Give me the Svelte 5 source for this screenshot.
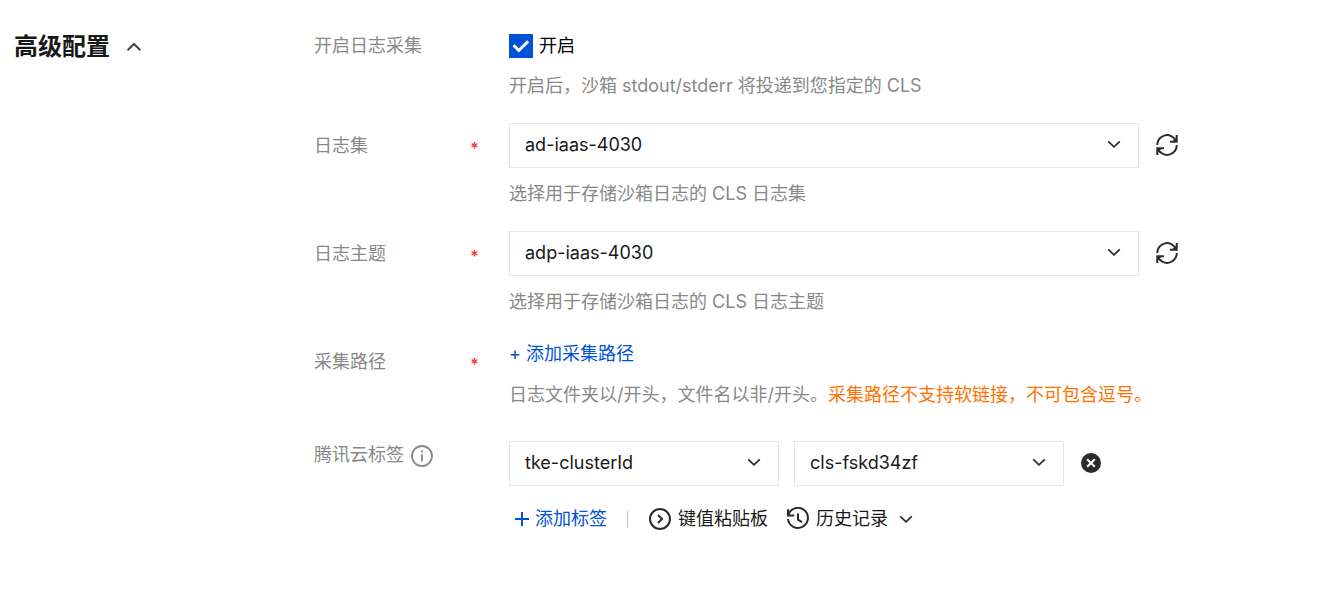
<script lang="ts">
    let expanded = $state(true);
    let logEnabled = $state(true);
    let logset = $state("ad-iaas-4030");
    let topic = $state("adp-iaas-4030");
    let tags = $state([{ key: "tke-clusterId", value: "cls-fskd34zf" }]);

    function addTag() {
        tags.push({ key: "tke-clusterId", value: "cls-fskd34zf" });
    }

    function removeTag(index: number) {
        tags.splice(index, 1);
    }
</script>

{#snippet chevron()}
    <svg class="chevron" width="14" height="14" viewBox="0 0 14 14" aria-hidden="true">
        <path d="M1.2 4.3 7 9.8l5.8-5.5" />
    </svg>
{/snippet}

{#snippet refreshButton(label: string)}
    <button type="button" class="icon-button" aria-label={label}>
        <svg width="24" height="24" viewBox="0 0 24 24" aria-hidden="true">
            <path d="M2.2 12A9.8 9.8 0 0 1 20.8 7.6M21.8 12A9.8 9.8 0 0 1 3.2 16.4" />
            <path d="M21.7 2v6.7H15M2.3 22v-6.7H9" />
            <path class="solid" d="M21.7 4v4.7H17zM2.3 20v-4.7H7z" />
        </svg>
    </button>
{/snippet}

<section class="advanced">
    <h2 class="title">
        <button type="button" aria-expanded={expanded} onclick={() => (expanded = !expanded)}>
            <span>高级配置</span>
            <svg class="title-arrow" class:closed={!expanded} width="16" height="16" viewBox="0 0 16 16" aria-hidden="true">
                <path d="M1.6 11.2 8 5l6.4 6.2" />
            </svg>
        </button>
    </h2>

    {#if expanded}
        <form class="form">
            <div class="row">
                <div class="label top">开启日志采集</div>
                <div class="control">
                    <label class="check">
                        <input type="checkbox" bind:checked={logEnabled} />
                        <span>开启</span>
                    </label>
                    <p class="hint">开启后，沙箱 stdout/stderr 将投递到您指定的 CLS</p>
                </div>
            </div>

            <div class="row">
                <label class="label" for="logset">日志集<span class="required">*</span></label>
                <div class="control">
                    <div class="field">
                        <div class="select">
                            <select id="logset" bind:value={logset}>
                                <option>ad-iaas-4030</option>
                            </select>
                            {@render chevron()}
                        </div>
                        {@render refreshButton("刷新日志集")}
                    </div>
                    <p class="hint">选择用于存储沙箱日志的 CLS 日志集</p>
                </div>
            </div>

            <div class="row">
                <label class="label" for="topic">日志主题<span class="required">*</span></label>
                <div class="control">
                    <div class="field">
                        <div class="select">
                            <select id="topic" bind:value={topic}>
                                <option>adp-iaas-4030</option>
                            </select>
                            {@render chevron()}
                        </div>
                        {@render refreshButton("刷新日志主题")}
                    </div>
                    <p class="hint">选择用于存储沙箱日志的 CLS 日志主题</p>
                </div>
            </div>

            <div class="row">
                <div class="label">采集路径<span class="required">*</span></div>
                <div class="control">
                    <button type="button" class="link add-path">+ 添加采集路径</button>
                    <p class="hint">
                        日志文件夹以/开头，文件名以非/开头。<span class="warning">采集路径不支持软链接，不可包含逗号。</span>
                    </p>
                </div>
            </div>

            <div class="row tags">
                <div class="label top">
                    腾讯云标签
                    <svg class="info" width="24" height="24" viewBox="0 0 24 24" aria-hidden="true">
                        <circle cx="12" cy="12" r="10" />
                        <path d="M12 10.2v7.2M12 6.4v2" />
                    </svg>
                </div>
                <div class="control">
                    {#each tags as tag, i}
                        <div class="field tag">
                            <div class="select">
                                <select aria-label="标签键" bind:value={tag.key}>
                                    <option>tke-clusterId</option>
                                </select>
                                {@render chevron()}
                            </div>
                            <div class="select">
                                <select aria-label="标签值" bind:value={tag.value}>
                                    <option>cls-fskd34zf</option>
                                </select>
                                {@render chevron()}
                            </div>
                            <button type="button" class="icon-button" aria-label="删除标签" onclick={() => removeTag(i)}>
                                <svg width="24" height="24" viewBox="0 0 24 24" aria-hidden="true">
                                    <circle class="solid" cx="12" cy="12" r="10" />
                                    <path class="cross" d="m8.2 8.2 7.6 7.6M15.8 8.2l-7.6 7.6" />
                                </svg>
                            </button>
                        </div>
                    {/each}
                    <div class="actions">
                        <button type="button" class="link" onclick={addTag}>
                            <svg width="16" height="16" viewBox="0 0 16 16" aria-hidden="true">
                                <path d="M8 1v14M1 8h14" />
                            </svg>
                            添加标签
                        </button>
                        <span class="divider"></span>
                        <button type="button" class="action">
                            <svg width="24" height="24" viewBox="0 0 24 24" aria-hidden="true">
                                <circle cx="12" cy="12" r="10" />
                                <path d="m10 8 4 4-4 4" />
                            </svg>
                            键值粘贴板
                        </button>
                        <button type="button" class="action history">
                            <svg width="24" height="24" viewBox="0 0 24 24" aria-hidden="true">
                                <path d="M2.3 8.2A10 10 0 1 1 2 12M2 2.2v6.3h6.2" />
                                <path d="M12 6.5v6.2l4 2.5" />
                            </svg>
                            历史记录
                            {@render chevron()}
                        </button>
                    </div>
                </div>
            </div>
        </form>
    {/if}
</section>

<style>
    :global(body) {
        margin: 0;
        background: #fff;
    }

    .advanced {
        display: grid;
        grid-template-columns: 300px minmax(0, 1fr);
        padding: 34px 14px;
        font-family: Inter, "Noto Sans CJK SC", sans-serif;
        font-size: 18px;
        line-height: 24px;
        color: #181818;
    }

    button,
    select {
        margin: 0;
        padding: 0;
        border: 0;
        background: none;
        font: inherit;
        color: inherit;
        cursor: pointer;
    }

    svg {
        flex: none;
        fill: none;
        stroke: #2b2b2b;
        stroke-width: 2;
    }

    .title {
        margin: 0;
        font-size: 24px;
        line-height: 26px;
        font-weight: 700;
    }

    .title button {
        display: flex;
        align-items: center;
        gap: 16px;
    }

    .title-arrow {
        stroke: #444;
    }

    .title-arrow.closed {
        transform: rotate(180deg);
    }

    .form {
        display: flex;
        flex-direction: column;
        gap: 24px;
    }

    .row {
        display: grid;
        grid-template-columns: 195px minmax(0, 1fr);
    }

    .row.tags {
        margin-top: 9px;
    }

    .label {
        display: flex;
        align-items: flex-start;
        padding-top: 11px;
        padding-right: 30px;
        color: #888;
    }

    .label.top {
        padding-top: 0;
    }

    .tags .label.top {
        padding-top: 2px;
    }

    .required {
        margin-left: auto;
        padding-top: 2px;
        font-size: 16px;
        font-weight: 700;
        color: #f53f3f;
    }

    .info {
        margin: 1px 0 0 6px;
        stroke: #888;
        stroke-width: 1.8;
    }

    .check {
        display: flex;
        align-items: center;
        gap: 6px;
        width: fit-content;
        padding-bottom: 2px;
        color: #000;
        cursor: pointer;
    }

    .check input {
        appearance: none;
        width: 24px;
        height: 24px;
        margin: 0;
        border: 1px solid #cfd5de;
    }

    .check input:checked {
        border-color: #0052d9;
        background: #0052d9 url("data:image/svg+xml,%3Csvg xmlns='http://www.w3.org/2000/svg' viewBox='0 0 24 24'%3E%3Cpath d='m4.5 11.3 5.3 5.2 9.4-9.2' fill='none' stroke='white' stroke-width='3'/%3E%3C/svg%3E") center / 24px 24px;
    }

    .hint {
        margin: 13px 0 0;
        line-height: 26px;
        color: #888;
    }

    .warning {
        color: #ff7200;
    }

    .field {
        display: flex;
        align-items: center;
        gap: 16px;
    }

    .select {
        position: relative;
        flex: 0 1 630px;
    }

    .tag {
        gap: 15px;
    }

    .tag + .tag {
        margin-top: 15px;
    }

    .tag .select {
        flex-basis: 270px;
    }

    .select select {
        display: block;
        appearance: none;
        box-sizing: border-box;
        width: 100%;
        height: 45px;
        padding: 0 40px 2px 15px;
        border: 1px solid #e7e7ef;
        border-radius: 0;
        background: #fff;
    }

    .select .chevron {
        position: absolute;
        top: 14px;
        right: 18px;
        pointer-events: none;
    }

    .chevron {
        stroke-width: 1.7;
    }

    .icon-button {
        display: flex;
        padding-bottom: 1px;
    }

    .icon-button .solid {
        fill: #2b2b2b;
        stroke: none;
    }

    .icon-button .cross {
        stroke: #fff;
    }

    .link {
        color: #0052d9;
    }

    .link svg {
        stroke: #0052d9;
    }

    .add-path {
        display: block;
        line-height: 30px;
    }

    .actions {
        display: flex;
        align-items: center;
        padding: 20px 0 0 5px;
        line-height: 26px;
    }

    .actions button {
        display: flex;
        align-items: center;
        gap: 6px;
    }

    .actions .link {
        gap: 5px;
    }

    .divider {
        width: 1px;
        height: 16px;
        margin: 0 20px;
        background: #bbb;
    }

    .actions .history {
        margin-left: 18px;
    }

    .history .chevron {
        margin-left: 5px;
    }
</style>
